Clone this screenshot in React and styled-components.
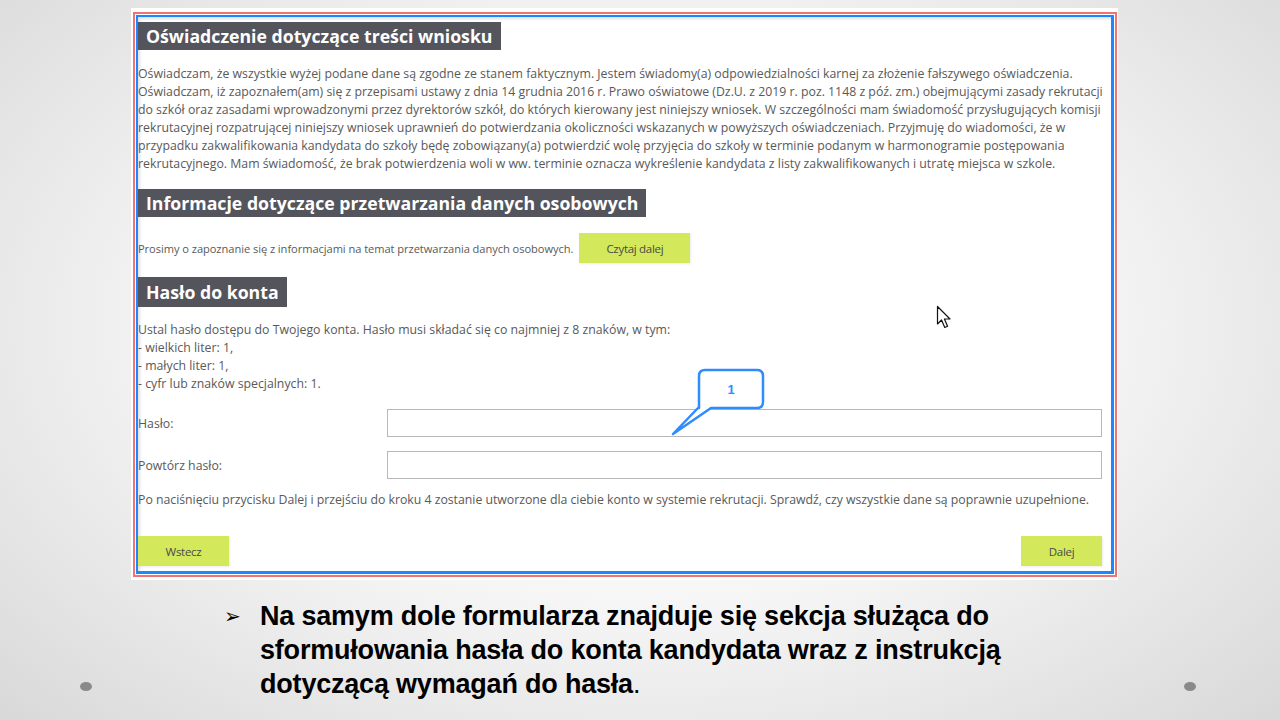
import styled, { createGlobalStyle } from 'styled-components';

const GlobalStyle = createGlobalStyle`
  html, body {
    margin: 0;
    padding: 0;
  }
  body {
    width: 1280px;
    height: 720px;
    overflow: hidden;
    font-family: "Open Sans", "Noto Sans", sans-serif;
  }
`;

const statementLines = [
  'Oświadczam, że wszystkie wyżej podane dane są zgodne ze stanem faktycznym. Jestem świadomy(a) odpowiedzialności karnej za złożenie fałszywego oświadczenia.',
  'Oświadczam, iż zapoznałem(am) się z przepisami ustawy z dnia 14 grudnia 2016 r. Prawo oświatowe (Dz.U. z 2019 r. poz. 1148 z póź. zm.) obejmującymi zasady rekrutacji',
  'do szkół oraz zasadami wprowadzonymi przez dyrektorów szkół, do których kierowany jest niniejszy wniosek. W szczególności mam świadomość przysługujących komisji',
  'rekrutacyjnej rozpatrującej niniejszy wniosek uprawnień do potwierdzania okoliczności wskazanych w powyższych oświadczeniach. Przyjmuję do wiadomości, że w',
  'przypadku zakwalifikowania kandydata do szkoły będę zobowiązany(a) potwierdzić wolę przyjęcia do szkoły w terminie podanym w harmonogramie postępowania',
  'rekrutacyjnego. Mam świadomość, że brak potwierdzenia woli w ww. terminie oznacza wykreślenie kandydata z listy zakwalifikowanych i utratę miejsca w szkole.',
];

const passwordLines = [
  'Ustal hasło dostępu do Twojego konta. Hasło musi składać się co najmniej z 8 znaków, w tym:',
  '- wielkich liter: 1,',
  '- małych liter: 1,',
  '- cyfr lub znaków specjalnych: 1.',
];

const App = () => {
  return (
    <>
      <GlobalStyle />
      <Slide>
        <Shot>
          <RedFrame>
            <BlueFrame>
              <SectionTitle $top={5}>Oświadczenie dotyczące treści wniosku</SectionTitle>
              <Paragraph $top={15}>
                {statementLines.map((line) => (
                  <Line key={line}>{line}</Line>
                ))}
              </Paragraph>

              <SectionTitle $top={16}>Informacje dotyczące przetwarzania danych osobowych</SectionTitle>
              <InfoRow>
                <SmallText>Prosimy o zapoznanie się z informacjami na temat przetwarzania danych osobowych.</SmallText>
                <GreenButton $width={111}>Czytaj dalej</GreenButton>
              </InfoRow>

              <SectionTitle $top={14} $height={30}>Hasło do konta</SectionTitle>
              <Paragraph $top={14}>
                {passwordLines.map((line) => (
                  <Line key={line}>{line}</Line>
                ))}
              </Paragraph>

              <FieldRow $top={16}>
                <FieldLabel>Hasło:</FieldLabel>
                <TextInput type="password" />
              </FieldRow>
              <FieldRow $top={14}>
                <FieldLabel>Powtórz hasło:</FieldLabel>
                <TextInput type="password" />
              </FieldRow>

              <NoteText>
                Po naciśnięciu przycisku Dalej i przejściu do kroku 4 zostanie utworzone dla ciebie konto w systemie rekrutacji. Sprawdź, czy wszystkie dane są poprawnie uzupełnione.
              </NoteText>

              <ButtonBar>
                <GreenButton $width={91}>Wstecz</GreenButton>
                <GreenButton $width={81}>Dalej</GreenButton>
              </ButtonBar>
            </BlueFrame>
          </RedFrame>
        </Shot>

        <Callout>
          <svg width="105" height="75" viewBox="0 0 105 75">
            <path
              d="M40 5 H92 Q98 5 98 11 V37 Q98 43 92 43 H46 L8 69 L33 43 Q34 43 34 43 Q34 43 34 37 V11 Q34 5 40 5 Z"
              fill="#ffffff"
              stroke="#2f8cff"
              strokeWidth="2.5"
              strokeLinejoin="round"
            />
          </svg>
          <CalloutNumber>1</CalloutNumber>
        </Callout>

        <Cursor>
          <svg width="18" height="26" viewBox="0 0 18 26">
            <path
              d="M1.5 1.5 L1.5 19 L5.5 15 L8.8 22.5 L11.6 21.3 L8.4 14 L14 14 Z"
              fill="#ffffff"
              stroke="#111111"
              strokeWidth="1.2"
              strokeLinejoin="round"
            />
          </svg>
        </Cursor>

        <Bullets>
          <BulletMark>➢</BulletMark>
          <BulletText>
            Na samym dole formularza znajduje się sekcja służąca do
            <br />
            sformułowania hasła do konta kandydata wraz z instrukcją
            <br />
            dotyczącą wymagań do hasła<Plain>.</Plain>
          </BulletText>
        </Bullets>

        <Dot $left={80} />
        <Dot $left={1184} />
      </Slide>
    </>
  );
};

const Slide = styled.div`
  position: relative;
  width: 1280px;
  height: 720px;
  background: radial-gradient(ellipse 75% 85% at 50% 45%, #ffffff 0%, #f6f6f6 45%, #d4d4d4 100%);
  display: flex;
  flex-direction: column;
  align-items: flex-start;
  overflow: hidden;
`;

const Shot = styled.div`
  margin: 8px 0 0 131px;
  width: 987px;
  height: 572px;
  box-sizing: border-box;
  background: #ffffff;
  padding: 4px 1px 3px 2px;
`;

const RedFrame = styled.div`
  height: 100%;
  box-sizing: border-box;
  border: 2px solid #f07373;
  padding: 1px;
`;

const BlueFrame = styled.div`
  height: 100%;
  box-sizing: border-box;
  border: 3px solid #1f86ff;
  border-left-width: 2px;
  border-top-width: 2px;
  padding: 0 9px 0 0;
  display: flex;
  flex-direction: column;
  align-items: flex-start;
  color: #595959;
  box-shadow: inset 2px 2px 3px rgba(0, 0, 0, 0.12);
`;

const SectionTitle = styled.div`
  margin-top: ${(p) => p.$top}px;
  height: ${(p) => p.$height || 28}px;
  box-sizing: border-box;
  padding: 0 8px;
  background: #54545c;
  color: #ffffff;
  font-size: 17.7px;
  font-weight: 700;
  display: flex;
  align-items: center;
  white-space: nowrap;
`;

const Paragraph = styled.div`
  margin-top: ${(p) => p.$top}px;
  font-size: 12.3px;
  line-height: 18px;
`;

const Line = styled.div`
  white-space: nowrap;
`;

const InfoRow = styled.div`
  margin-top: 16px;
  display: flex;
  align-items: center;
  gap: 6px;
`;

const SmallText = styled.span`
  font-size: 11.1px;
  letter-spacing: -0.05px;
  white-space: nowrap;
`;

const GreenButton = styled.div`
  width: ${(p) => p.$width}px;
  height: 30px;
  background: #d3e85b;
  color: #4a4a4a;
  font-size: 11.5px;
  letter-spacing: -0.3px;
  display: flex;
  align-items: center;
  justify-content: center;
  box-shadow: 1px 1px 2px rgba(0, 0, 0, 0.08);
`;

const FieldRow = styled.div`
  margin-top: ${(p) => p.$top}px;
  align-self: stretch;
  display: flex;
  align-items: center;
`;

const FieldLabel = styled.div`
  width: 249px;
  font-size: 12.3px;
  flex-shrink: 0;
`;

const TextInput = styled.input`
  flex: 1;
  height: 28px;
  box-sizing: border-box;
  border: 1.5px solid #b8b8b8;
  background: #ffffff;
  margin: 0;
  outline: none;
`;

const NoteText = styled.div`
  margin-top: 12px;
  font-size: 12.3px;
  letter-spacing: -0.02px;
  line-height: 18px;
  white-space: nowrap;
`;

const ButtonBar = styled.div`
  margin-top: 27px;
  align-self: stretch;
  display: flex;
  justify-content: space-between;
`;

const Callout = styled.div`
  position: absolute;
  left: 665px;
  top: 365px;
  width: 105px;
  height: 75px;
`;

const CalloutNumber = styled.span`
  position: absolute;
  left: 34px;
  top: 5px;
  width: 64px;
  height: 38px;
  display: flex;
  align-items: center;
  justify-content: center;
  color: #2f8cff;
  font-family: "Liberation Sans", Arial, sans-serif;
  font-weight: 700;
  font-size: 13px;
`;

const Cursor = styled.div`
  position: absolute;
  left: 936px;
  top: 305px;
  line-height: 0;
`;

const Bullets = styled.div`
  margin: 19px 0 0 224px;
  display: flex;
  align-items: flex-start;
  color: #000000;
  font-family: "Liberation Sans", Arial, sans-serif;
  font-size: 27px;
  font-weight: 700;
  line-height: 34px;
`;

const BulletMark = styled.span`
  width: 36px;
  font-family: "DejaVu Sans", sans-serif;
  font-weight: 400;
  font-size: 20px;
`;

const BulletText = styled.div`
  letter-spacing: -0.2px;
`;

const Plain = styled.span`
  font-weight: 400;
`;

const Dot = styled.div`
  position: absolute;
  left: ${(p) => p.$left}px;
  top: 682px;
  width: 12px;
  height: 9px;
  border-radius: 50%;
  background: #8a8a8a;
`;

export default App;
